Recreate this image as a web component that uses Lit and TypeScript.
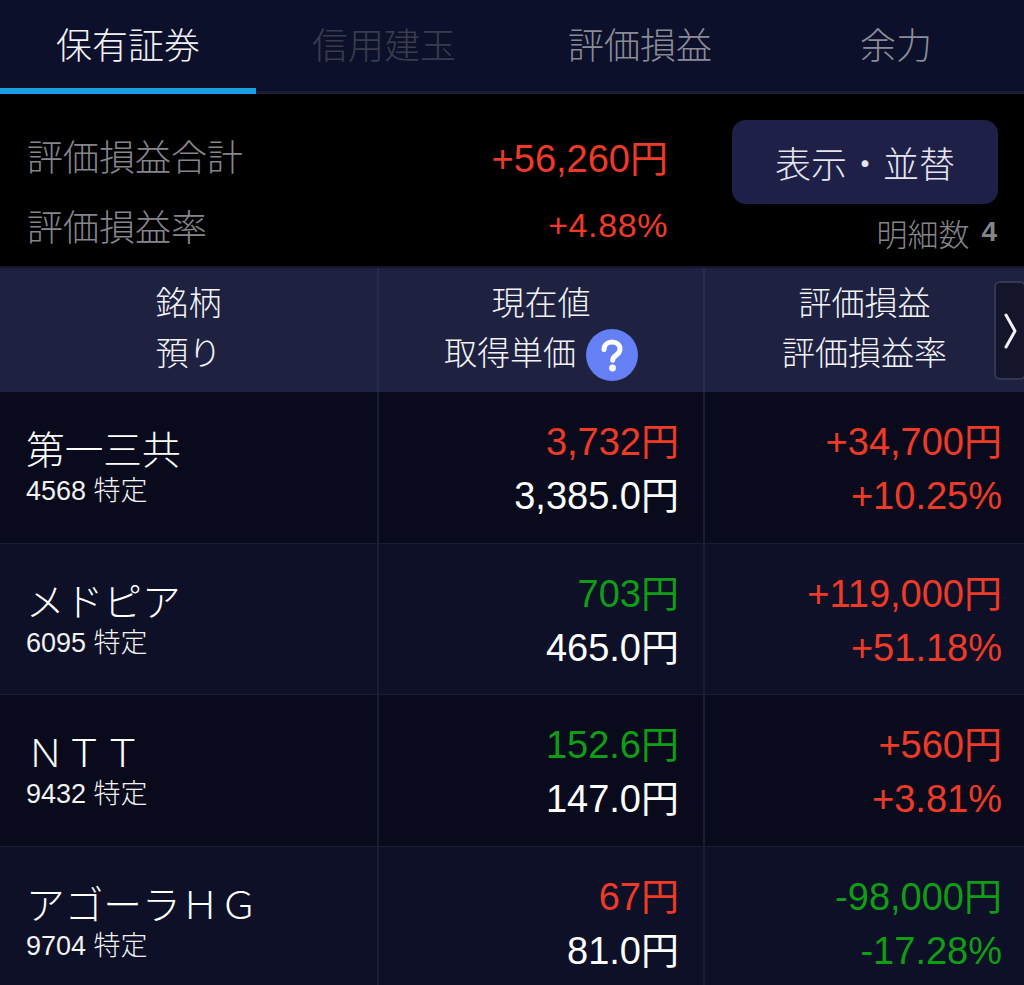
import { LitElement, html, css } from "lit";
import { customElement } from "lit/decorators.js";

type Tone = "up" | "down" | "plain";
interface Row { name: string; code: string; cur: string; curTone: Tone; cost: string; pl: string; plr: string; plTone: Tone; }

const rows: Row[] = [
  { name: "第一三共", code: "4568", cur: "3,732円", curTone: "up", cost: "3,385.0円", pl: "+34,700円", plr: "+10.25%", plTone: "up" },
  { name: "メドピア", code: "6095", cur: "703円", curTone: "down", cost: "465.0円", pl: "+119,000円", plr: "+51.18%", plTone: "up" },
  { name: "ＮＴＴ", code: "9432", cur: "152.6円", curTone: "down", cost: "147.0円", pl: "+560円", plr: "+3.81%", plTone: "up" },
  { name: "アゴーラＨＧ", code: "9704", cur: "67円", curTone: "up", cost: "81.0円", pl: "-98,000円", plr: "-17.28%", plTone: "down" },
];

@customElement("app-root")
export class AppRoot extends LitElement {
  static styles = css`
    :host {
      display: block;
      width: 1024px;
      height: 985px;
      overflow: hidden;
      background: #000;
      font-family: "Liberation Sans", "Noto Sans CJK JP", sans-serif;
      color: #fff;
    }
    .tabs {
      display: grid;
      grid-template-columns: repeat(4, 256px);
      height: 94px;
      background: #0d102a;
      box-sizing: border-box;
      border-bottom: 3px solid #1a1d33;
    }
    .tab {
      display: flex;
      align-items: center;
      justify-content: center;
      height: 91px;
      padding-bottom: 5px;
      box-sizing: border-box;
      font-size: 36px;
      color: #8b8c98;
      font-weight: 300;
    }
    .tab.active {
      color: #f2f2f6;
      height: 94px;
      border-bottom: 6px solid #1a9fe4;
      padding-bottom: 2px;
    }
    .tab.disabled { color: #3a3c4e; }
    .summary {
      display: flex;
      height: 174px;
      box-sizing: border-box;
      border-bottom: 2px solid #141728;
    }
    .totals {
      width: 668px;
      padding: 34px 0 0 27px;
      box-sizing: border-box;
      display: grid;
      grid-template-rows: 54px 54px;
      row-gap: 16px;
    }
    .total-row { display: flex; justify-content: space-between; align-items: center; }
    .label { font-size: 36px; color: #85858c; font-weight: 300; }
    .v1 { font-size: 38px; color: #f03a28; }
    .v2 { font-size: 34px; color: #f03a28; letter-spacing: 0.6px; }
    .side { margin-left: 64px; width: 266px; padding-top: 26px; }
    .btn {
      height: 84px;
      border-radius: 14px;
      background: #1f2047;
      color: #e6e6ee;
      font-size: 36px;
      font-weight: 300;
      display: flex;
      align-items: center;
      justify-content: center;
    }
    .count {
      display: flex;
      justify-content: flex-end;
      align-items: center;
      gap: 12px;
      height: 56px;
      padding-right: 1px;
      color: #85858c;
      font-size: 31px;
      font-weight: 300;
    }
    .count b { font-size: 28px; font-weight: 700; }
    .table { position: relative; }
    .row {
      display: grid;
      grid-template-columns: 379px 326px 319px;
      box-sizing: border-box;
      height: 151px;
      border-bottom: 1px solid #1a1d35;
    }
    .row.head {
      height: 124px;
      background: #1e2240;
      border-bottom: 0;
      font-size: 33px;
      font-weight: 300;
      color: #f4f4f8;
    }
    .row.odd { background: #090b1d; height: 152px; }
    .row.even { background: #0d1026; }
    .cell {
      box-sizing: border-box;
      border-right: 2px solid #1a1d35;
    }
    .cell:nth-child(2) { padding-right: 24px; }
    .cell:last-child { border-right: 0; padding-right: 22px; }
    .head .cell {
      display: flex;
      flex-direction: column;
      align-items: center;
      justify-content: center;
      line-height: 50px;
      padding: 0 0 3px;
      border-right-color: #272b4b;
    }
    .head .cell:last-child { padding-right: 0; padding-left: 0; width: 319px; }
    .head .c3 { padding-right: 0; }
    .head .line { display: flex; align-items: center; gap: 10px; height: 50px; }
    .help { display: block; margin-top: 2px; margin-right: 0; }
    .name-cell { padding: 33px 0 0 26px; }
    .name { font-size: 38.7px; line-height: 52px; font-weight: 300; white-space: nowrap; }
    .code { font-size: 27px; line-height: 30px; margin-top: -1px; color: #f2f2f2; font-weight: 300; }
    .num {
      display: flex;
      flex-direction: column;
      align-items: flex-end;
      padding-top: 23px;
      font-size: 38px;
      line-height: 54px;
    }
    .up { color: #f03a28; }
    .down { color: #0f9d16; }
    .plain { color: #fff; }
    .more {
      position: absolute;
      right: -2px;
      top: 13px;
      width: 32px;
      height: 99px;
      box-sizing: border-box;
      background: #14152a;
      border: 2px solid #34374f;
      border-radius: 6px;
      display: flex;
      align-items: center;
      padding-left: 8px;
    }
  `;

  render() {
    return html`
      <div class="tabs">
        <div class="tab active">保有証券</div>
        <div class="tab disabled">信用建玉</div>
        <div class="tab">評価損益</div>
        <div class="tab">余力</div>
      </div>
      <div class="summary">
        <div class="totals">
          <div class="total-row"><span class="label">評価損益合計</span><span class="v1">+56,260円</span></div>
          <div class="total-row"><span class="label">評価損益率</span><span class="v2">+4.88%</span></div>
        </div>
        <div class="side">
          <div class="btn">表示・並替</div>
          <div class="count"><span>明細数</span><b>4</b></div>
        </div>
      </div>
      <div class="table">
        <div class="row head">
          <div class="cell"><div class="line">銘柄</div><div class="line">預り</div></div>
          <div class="cell c2">
            <div class="line">現在値</div>
            <div class="line">取得単価
              <svg class="help" width="52" height="52" viewBox="0 0 52 52">
                <circle cx="26" cy="26" r="26" fill="#6580f5"/>
                <path d="M18 20.5c0-4.6 3.6-7.5 8-7.5s8 2.8 8 7c0 3-1.600 4.700-4 6.300-2.300 1.500-3.300 2.600-3.300 5" fill="none" stroke="#fff" stroke-width="5" stroke-linecap="round"/>
                <circle cx="26.500" cy="39" r="3.400" fill="#fff"/>
              </svg>
            </div>
          </div>
          <div class="cell c3"><div class="line">評価損益</div><div class="line">評価損益率</div></div>
        </div>
        ${rows.map((r, i) => html`
          <div class="row ${i % 2 ? "even" : "odd"}">
            <div class="cell name-cell">
              <div class="name">${r.name}</div>
              <div class="code">${r.code} 特定</div>
            </div>
            <div class="cell num"><span class="${r.curTone}">${r.cur}</span><span class="plain">${r.cost}</span></div>
            <div class="cell num"><span class="${r.plTone}">${r.pl}</span><span class="${r.plTone}">${r.plr}</span></div>
          </div>`)}
        <div class="more">
          <svg width="14" height="36" viewBox="0 0 14 36"><path d="M2 2l9 16-9 16" fill="none" stroke="#f2f2f6" stroke-width="3" stroke-linecap="round" stroke-linejoin="round"/></svg>
        </div>
      </div>
    `;
  }
}
